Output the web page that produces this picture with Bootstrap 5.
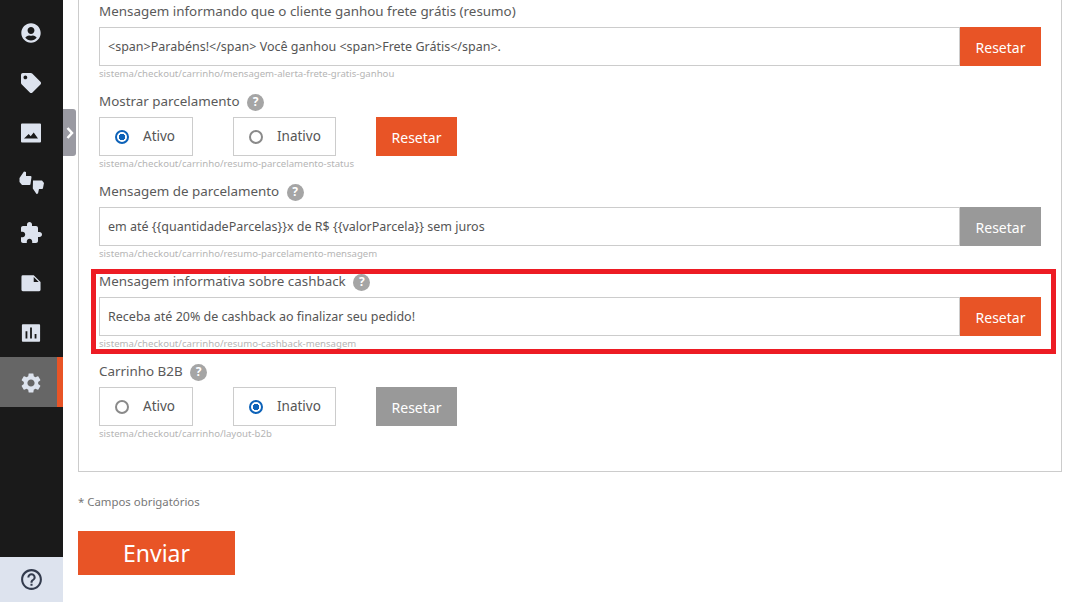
<!DOCTYPE html>
<html lang="pt-BR">
<head>
<meta charset="utf-8">
<title>Configurações</title>
<link href="https://cdn.jsdelivr.net/npm/bootstrap@5.3.0/dist/css/bootstrap.min.css" rel="stylesheet">
<style>
html,body{height:602px;overflow:hidden;background:#fff}
body{font-family:"Noto Sans","Open Sans",sans-serif;color:#555;font-size:13px}
.shell{height:602px}
.side{width:63px;flex:none;background:#1a1a1a;padding-top:7px}
.side-item{height:50px;color:#dde3ee;padding:1px 1px 0 0}
.side-item svg{width:20px;height:20px;fill:currentColor}
.side-item svg.ico-thumbs{width:25px;height:23px}
.side-item svg.ico-puzzle{width:24px;height:24px}
.side-item svg.ico-gear{width:24px;height:24px}
.side-item.sel{background:#666;border-right:6px solid #e85426;padding:1px 0 0 4px}
.side-help{height:45px;background:#dde3ee;color:#333b4d}
.side-help svg{width:25px;height:25px;fill:currentColor}
.handle{position:absolute;left:63px;top:109px;width:13px;height:47px;background:#9a9aa2;border-radius:0 3px 3px 0}
.main-col{padding-left:15px;padding-right:10px;min-width:0}
.set-box{border:1px solid #ccc;border-top:0;height:472px;padding:0 20px}
.grp{height:90px;position:relative}
.grp-label{height:27px;line-height:23px;font-size:13.4px;color:#5a5a5a;white-space:nowrap}
.qm{display:inline-flex;width:17px;height:17px;border-radius:50%;background:#a5a5a5;color:#fff;font-size:12px;font-weight:700;align-items:center;justify-content:center;margin-left:4px;line-height:1;vertical-align:0}
.txt{flex:1;height:39px;border:1px solid #ccc;padding:0 8px;font-size:12.5px;line-height:37px;color:#555;white-space:nowrap;overflow:hidden}
.rst{width:81px;height:39px;flex:none;background:#e85426;color:#fff;font-size:14px;border:0;border-radius:0;padding:2px 0 0}
.rst:hover,.rst:active{background:#e85426;color:#fff}
.rst.off{background:#999}
.rst.off:hover{background:#999}
.hint{font-size:9.6px;line-height:15px;color:#b5b5b5;white-space:nowrap}
.opt{height:39px;border:1px solid #ccc;font-size:13.5px;color:#555}
.opt.a{width:94px;padding-left:15px}
.opt.b{width:103px;padding-left:15px;margin-left:40px}
.opt + .rst{margin-left:40px}
.dot{width:14px;height:14px;border-radius:50%;border:2px solid #8a8a8a;flex:none;margin-right:14px}
.dot.on{border-color:#0d62b8;background:radial-gradient(circle,#0d62b8 0 3px,#fff 3.5px)}
.flag{position:absolute;left:-8px;right:-15px;top:-1px;height:85px;border:5px solid #ed1c24;pointer-events:none}
.req{font-size:11.4px;color:#777;line-height:16px;padding-top:22px}
.send{display:block;width:157px;height:44px;background:#e85426;color:#fff;font-size:23px;border:0;border-radius:0;margin-top:21px;padding:0}
.send:hover{background:#e85426;color:#fff}
</style>
</head>
<body>
<div class="shell d-flex position-relative">
  <nav class="side d-flex flex-column">
    <div class="side-item d-flex align-items-center justify-content-center"><svg viewBox="0 0 496 512"><path d="M248 8C111 8 0 119 0 256s111 248 248 248 248-111 248-248S385 8 248 8zm0 96c48.6 0 88 39.4 88 88s-39.4 88-88 88-88-39.4-88-88 39.4-88 88-88zm0 344c-58.7 0-111.3-26.6-146.5-68.2 18.8-35.4 55.6-59.8 98.5-59.8 2.4 0 4.8.4 7.1 1.1 13 4.2 26.6 6.9 40.9 6.9 14.3 0 28-2.7 40.9-6.9 2.3-.7 4.7-1.1 7.1-1.1 42.9 0 79.7 24.4 98.5 59.8C359.3 421.4 306.7 448 248 448z"/></svg></div>
    <div class="side-item d-flex align-items-center justify-content-center"><svg viewBox="0 0 512 512"><path d="M0 252.118V48C0 21.49 21.49 0 48 0h204.118a48 48 0 0 1 33.941 14.059l211.882 211.882c18.745 18.745 18.745 49.137 0 67.882L293.823 497.941c-18.745 18.745-49.137 18.745-67.882 0L14.059 286.059A48 48 0 0 1 0 252.118zM112 64c-26.51 0-48 21.49-48 48s21.49 48 48 48 48-21.49 48-48-21.49-48-48-48z"/></svg></div>
    <div class="side-item d-flex align-items-center justify-content-center"><svg viewBox="1 1 20 20"><path fill-rule="evenodd" d="M2 1.500h18a1 1 0 0 1 1 1v17a1 1 0 0 1-1 1H2a1 1 0 0 1-1-1v-17a1 1 0 0 1 1-1zM4 16.500h14l-4.300-6-3 3.800-2-2.300z"/></svg></div>
    <div class="side-item d-flex align-items-center justify-content-center"><svg class="ico-thumbs" viewBox="0 0 25 23"><path d="M.5 7L5 .5 7 1v4h4.500a1 1 0 0 1 1 1L11.500 13a1 1 0 0 1-1 1H3L.5 11zM14 9.500h9L25 12l-1 5a1 1 0 0 1-1 1h-3l-1 4.500-1.500.5-3.700-5.500z"/></svg></div>
    <div class="side-item d-flex align-items-center justify-content-center"><svg class="ico-puzzle" viewBox="0 0 24 24"><path d="M20.500 11H19V7c0-1.100-.9-2-2-2h-4V3.500C13 2.120 11.880 1 10.500 1S8 2.120 8 3.500V5H4c-1.100 0-1.990.9-1.990 2v3.800H3.500c1.490 0 2.700 1.210 2.700 2.700s-1.210 2.700-2.700 2.700H2V20c0 1.100.9 2 2 2h3.800v-1.500c0-1.490 1.210-2.700 2.700-2.700 1.490 0 2.700 1.210 2.700 2.700V22H17c1.100 0 2-.9 2-2v-4h1.500c1.380 0 2.500-1.120 2.500-2.500S21.880 11 20.500 11z"/></svg></div>
    <div class="side-item d-flex align-items-center justify-content-center"><svg viewBox="0 0 21 22"><path fill-rule="evenodd" d="M1.500 2.500H13.500L21 10v8.500a1.500 1.500 0 0 1-1.500 1.500H1.500A1.500 1.500 0 0 1 0 18.500v-14.500a1.500 1.500 0 0 1 1.500-1.500zM13.500 4.500v5.500h5.500z"/></svg></div>
    <div class="side-item d-flex align-items-center justify-content-center"><svg viewBox="0 0 22 22"><path fill-rule="evenodd" d="M2 1.500h18a1 1 0 0 1 1 1v17a1 1 0 0 1-1 1H2a1 1 0 0 1-1-1v-17a1 1 0 0 1 1-1zM5 9v8h2V9zM10 5v12h2V5zM15 12v5h2v-5z"/></svg></div>
    <div class="side-item sel d-flex align-items-center justify-content-center"><svg class="ico-gear" viewBox="0 0 24 24"><path d="M19.140 12.940c.04-.3.06-.61.06-.94 0-.32-.02-.64-.07-.94l2.030-1.580c.18-.14.23-.41.12-.61l-1.920-3.320c-.12-.22-.37-.29-.59-.22l-2.390.96c-.5-.38-1.030-.7-1.620-.94l-.36-2.540c-.04-.24-.24-.41-.48-.41h-3.840c-.24 0-.43.17-.47.41l-.36 2.540c-.59.24-1.130.57-1.620.94l-2.390-.96c-.22-.08-.47 0-.59.22L2.740 8.870c-.12.21-.08.47.12.61l2.030 1.580c-.05.3-.09.63-.09.94s.02.64.07.94l-2.030 1.580c-.18.14-.23.41-.12.61l1.920 3.320c.12.22.37.29.59.22l2.390-.96c.5.38 1.030.7 1.620.94l.36 2.540c.05.24.24.41.48.41h3.840c.24 0 .44-.17.47-.41l.36-2.540c.59-.24 1.130-.56 1.620-.94l2.390.96c.22.08.47 0 .59-.22l1.920-3.320c.12-.22.07-.47-.12-.61l-2.010-1.580zM12 15.600c-1.980 0-3.600-1.620-3.600-3.600s1.620-3.600 3.600-3.600 3.600 1.620 3.600 3.600-1.620 3.600-3.600 3.600z"/></svg></div>
    <div class="side-help mt-auto d-flex align-items-center justify-content-center"><svg viewBox="0 0 24 24"><path d="M11 18h2v-2h-2v2zm1-16C6.480 2 2 6.480 2 12s4.480 10 10 10 10-4.480 10-10S17.520 2 12 2zm0 18c-4.410 0-8-3.590-8-8s3.590-8 8-8 8 3.590 8 8-3.590 8-8 8zm0-14c-2.210 0-4 1.790-4 4h2c0-1.100.9-2 2-2s2 .9 2 2c0 2-3 1.750-3 5h2c0-2.250 3-2.500 3-5 0-2.210-1.790-4-4-4z"/></svg></div>
  </nav>
  <div class="handle d-flex align-items-center justify-content-center"><svg width="8" height="12" viewBox="0 0 8 12"><path d="M1.500 1l4.500 5-4.500 5" fill="none" stroke="#fff" stroke-width="2.500"/></svg></div>
  <main class="main-col flex-grow-1">
    <div class="set-box">
      <div class="grp">
        <div class="grp-label">Mensagem informando que o cliente ganhou frete grátis (resumo)</div>
        <div class="d-flex"><div class="txt">&lt;span&gt;Parabéns!&lt;/span&gt; Você ganhou &lt;span&gt;Frete Grátis&lt;/span&gt;.</div><button class="btn rst">Resetar</button></div>
        <div class="hint">sistema/checkout/carrinho/mensagem-alerta-frete-gratis-ganhou</div>
      </div>
      <div class="grp">
        <div class="grp-label">Mostrar parcelamento <span class="qm">?</span></div>
        <div class="d-flex">
          <div class="opt a d-flex align-items-center"><span class="dot on"></span>Ativo</div>
          <div class="opt b d-flex align-items-center"><span class="dot"></span>Inativo</div>
          <button class="btn rst">Resetar</button>
        </div>
        <div class="hint">sistema/checkout/carrinho/resumo-parcelamento-status</div>
      </div>
      <div class="grp">
        <div class="grp-label">Mensagem de parcelamento <span class="qm">?</span></div>
        <div class="d-flex"><div class="txt">em até {{quantidadeParcelas}}x de R$ {{valorParcela}} sem juros</div><button class="btn rst off">Resetar</button></div>
        <div class="hint">sistema/checkout/carrinho/resumo-parcelamento-mensagem</div>
      </div>
      <div class="grp">
        <div class="flag"></div>
        <div class="grp-label">Mensagem informativa sobre cashback <span class="qm">?</span></div>
        <div class="d-flex"><div class="txt">Receba até 20% de cashback ao finalizar seu pedido!</div><button class="btn rst">Resetar</button></div>
        <div class="hint">sistema/checkout/carrinho/resumo-cashback-mensagem</div>
      </div>
      <div class="grp">
        <div class="grp-label">Carrinho B2B <span class="qm">?</span></div>
        <div class="d-flex">
          <div class="opt a d-flex align-items-center"><span class="dot"></span>Ativo</div>
          <div class="opt b d-flex align-items-center"><span class="dot on"></span>Inativo</div>
          <button class="btn rst off">Resetar</button>
        </div>
        <div class="hint">sistema/checkout/carrinho/layout-b2b</div>
      </div>
    </div>
    <div class="req">* Campos obrigatórios</div>
    <button class="btn send">Enviar</button>
  </main>
</div>
</body>
</html>
